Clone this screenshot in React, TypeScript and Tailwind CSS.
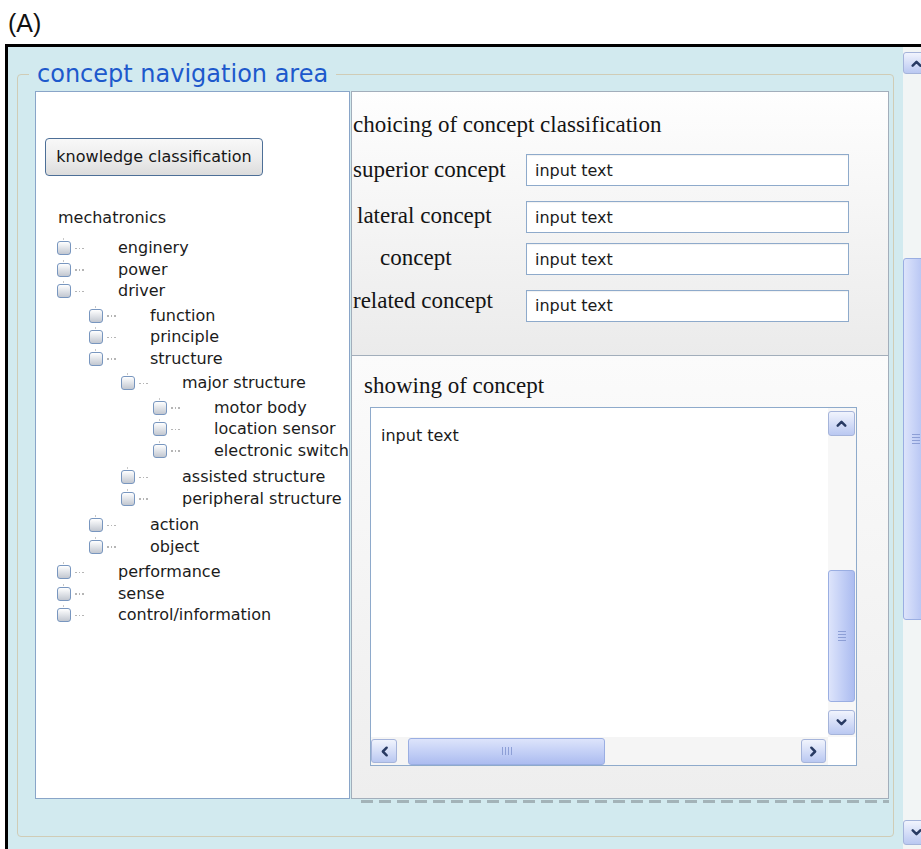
import clsx from "clsx";

type Dir = "up" | "down" | "left" | "right";

type TreeNode = { label: string; depth: 0 | 1 | 2 | 3; gap?: string };

const conceptTree: TreeNode[] = [
  { label: "enginery", depth: 0 },
  { label: "power", depth: 0 },
  { label: "driver", depth: 0 },
  { label: "function", depth: 1, gap: "mt-[3px]" },
  { label: "principle", depth: 1 },
  { label: "structure", depth: 1 },
  { label: "major structure", depth: 2, gap: "mt-[3px]" },
  { label: "motor body", depth: 3, gap: "mt-[3px]" },
  { label: "location sensor", depth: 3 },
  { label: "electronic switch", depth: 3 },
  { label: "assisted structure", depth: 2, gap: "mt-[5px]" },
  { label: "peripheral structure", depth: 2 },
  { label: "action", depth: 1, gap: "mt-[5px]" },
  { label: "object", depth: 1 },
  { label: "performance", depth: 0, gap: "mt-[4px]" },
  { label: "sense", depth: 0 },
  { label: "control/information", depth: 0 },
];

const indent = ["ml-0", "ml-[32px]", "ml-[64px]", "ml-[96px]"];

const conceptFields = [
  { label: "superior concept", gap: "mt-[15px]", labelClass: "pl-0" },
  { label: "lateral concept", gap: "mt-[15px]", labelClass: "pl-[4px] mb-[3px]" },
  { label: "concept", gap: "mt-[10px]", labelClass: "pl-[27px] mb-[2px]" },
  { label: "related concept", gap: "mt-[12px]", labelClass: "pl-0 mb-[9px]" },
];

const uiFont = "font-['DejaVu_Sans',sans-serif]";
const serifFont = "font-['Liberation_Serif',serif]";

function Chevron({ dir }: { dir: Dir }) {
  const d = {
    up: "M2.5 8 L6 4.5 L9.5 8",
    down: "M2.5 4 L6 7.5 L9.5 4",
    left: "M8 2.5 L4.5 6 L8 9.5",
    right: "M4 2.5 L7.5 6 L4 9.5",
  }[dir];
  return (
    <svg viewBox="0 0 12 12" className="h-[13px] w-[13px]" fill="none">
      <path d={d} stroke="#283a63" strokeWidth={2.3} strokeLinecap="round" strokeLinejoin="round" />
    </svg>
  );
}

function ScrollButton({ dir, className }: { dir: Dir; className?: string }) {
  return (
    <div
      className={clsx(
        "flex shrink-0 items-center justify-center rounded-[3px] border border-[#a5b4da] bg-linear-to-b from-[#f1f4fd] to-[#bac8f1]",
        className
      )}
    >
      <Chevron dir={dir} />
    </div>
  );
}

function VThumb({ className }: { className?: string }) {
  return (
    <div
      className={clsx(
        "flex shrink-0 items-center justify-center rounded-[3px] border border-[#9aaee2] bg-linear-to-r from-[#dde4fb] via-[#c4d0f6] to-[#acbcf0]",
        className
      )}
    >
      <div className="flex flex-col gap-[2px]">
        <div className="h-px w-[8px] bg-[#8d9fd6]" />
        <div className="h-px w-[8px] bg-[#8d9fd6]" />
        <div className="h-px w-[8px] bg-[#8d9fd6]" />
        <div className="h-px w-[8px] bg-[#8d9fd6]" />
      </div>
    </div>
  );
}

function HThumb({ className }: { className?: string }) {
  return (
    <div
      className={clsx(
        "flex shrink-0 items-center justify-center rounded-[3px] border border-[#9aaee2] bg-linear-to-b from-[#dde4fb] via-[#c4d0f6] to-[#acbcf0]",
        className
      )}
    >
      <div className="flex gap-[2px]">
        <div className="h-[8px] w-px bg-[#8d9fd6]" />
        <div className="h-[8px] w-px bg-[#8d9fd6]" />
        <div className="h-[8px] w-px bg-[#8d9fd6]" />
        <div className="h-[8px] w-px bg-[#8d9fd6]" />
      </div>
    </div>
  );
}

function TreeIcon() {
  return (
    <div className="relative flex items-center">
      <div className="absolute -top-[3px] left-[6px] h-[2px] w-px bg-[#c9c9c9]" />
      <div className="h-[14px] w-[14px] rounded-[3px] border border-[#7896bf] bg-linear-to-b from-[#ffffff] via-[#e0e3e8] to-[#c2c7d0]" />
      <div className="ml-[4px] flex gap-[2px]">
        <div className="h-[1.5px] w-[1.5px] bg-[#b5b5b5]" />
        <div className="h-[1.5px] w-[1.5px] bg-[#b5b5b5]" />
        <div className="h-[1.5px] w-[1.5px] bg-[#b5b5b5]" />
      </div>
    </div>
  );
}

function ClassificationPanel() {
  return (
    <div className={clsx("h-[708px] w-[315px] shrink-0 overflow-hidden border border-[#89a5c8] bg-white pl-[9px] pt-[46px] text-[16px] text-[#1b1b1b]", uiFont)}>
      <button className="flex h-[38px] w-[218px] items-center justify-center rounded-[4px] border border-[#4d6f97] bg-linear-to-b from-[#f8f8f8] via-[#eeeeee] to-[#dcdcdc] text-[16px] text-[#161616]">
        knowledge classification
      </button>

      <div className="ml-[13px] mt-[31px] flex h-[21.5px] items-center">mechatronics</div>

      <div className="ml-[12px] mt-[9px]">
        {conceptTree.map((node) => (
          <div key={node.label} className={clsx("flex h-[21.5px] items-center whitespace-nowrap", indent[node.depth], node.gap)}>
            <div className="w-[61px] shrink-0">
              <TreeIcon />
            </div>
            <span className="leading-none">{node.label}</span>
          </div>
        ))}
      </div>
    </div>
  );
}

function ConceptForm() {
  return (
    <div className={clsx("h-[265px] border border-[#a2aebb] bg-linear-to-b from-[#fefefe] to-[#ebebeb] pl-[1px] pt-[19px] text-[#141414]", serifFont)}>
      <div className="text-[23px] leading-[28px]">choicing of concept classification</div>
      {conceptFields.map((field) => (
        <div key={field.label} className={clsx("flex items-center", field.gap)}>
          <div className={clsx("w-[173px] shrink-0 whitespace-nowrap text-[23px] leading-[28px]", field.labelClass)}>{field.label}</div>
          <input
            readOnly
            value="input text"
            className={clsx("h-[32px] w-[323px] border border-[#8eaacb] bg-white px-[8px] text-[16px] text-[#1b1b1b] shadow-[inset_0_1px_1px_rgba(0,0,0,0.06)] outline-none", uiFont)}
          />
        </div>
      ))}
    </div>
  );
}

function ConceptViewer() {
  return (
    <div className={clsx("h-[443px] border-x border-b border-[#a2aebb] bg-linear-to-b from-[#fbfbfb] to-[#eeeeee] pl-[12px] pt-[16px] text-[#141414]", serifFont)}>
      <div className="text-[23px] leading-[28px]">showing of concept</div>
      <div className="ml-[6px] mt-[7px] grid h-[359px] w-[487px] grid-cols-[1fr_28px] grid-rows-[1fr_28px] border border-[#8eaacb] bg-white">
        <div className={clsx("pl-[10px] pt-[16px] text-[16px] leading-[24px] text-[#1b1b1b]", uiFont)}>input text</div>

        <div className="flex flex-col bg-[#f7f7f7] pr-[1px]">
          <ScrollButton dir="up" className="mt-[3px] h-[25px]" />
          <div className="flex-1" />
          <VThumb className="h-[132px]" />
          <ScrollButton dir="down" className="mb-[2px] mt-[8px] h-[25px]" />
        </div>

        <div className="flex items-center bg-[#f5f5f5]">
          <ScrollButton dir="left" className="h-[24px] w-[26px]" />
          <HThumb className="ml-[11px] h-[27px] w-[197px]" />
          <div className="flex-1" />
          <ScrollButton dir="right" className="mr-[2px] h-[24px] w-[25px]" />
        </div>

        <div className="bg-white" />
      </div>
    </div>
  );
}

function PageScrollbar() {
  return (
    <div className="flex w-[26px] shrink-0 flex-col bg-[#f2f5f5]">
      <ScrollButton dir="up" className="mt-[5px] h-[22px]" />
      <VThumb className="mt-[184px] h-[362px]" />
      <div className="flex-1" />
      <ScrollButton dir="down" className="mb-[4px] h-[25px]" />
    </div>
  );
}

export default function App() {
  return (
    <div className="flex h-[849px] w-[921px] flex-col overflow-hidden bg-white">
      <div className="h-[44px] shrink-0 pl-[8px] pt-[9px] font-['Liberation_Sans',sans-serif] text-[25px] leading-[28px] text-[#111]">(A)</div>

      <div className="ml-[5px] flex min-h-0 flex-1 border-l-[3px] border-t-[3px] border-black bg-[#d2eaef]">
        <div className="w-[895px] shrink-0 pl-[9px] pt-[12px]">
          <fieldset className="w-[877px] rounded-[4px] border border-[#d0ccb6] pb-[33px] pl-[17px] pr-[4px] pt-[2px]">
            <legend className={clsx("-ml-[6px] px-[8px] text-[24px] leading-[30px] text-[#1d59cc]", uiFont)}>concept navigation area</legend>

            <div className="flex items-start gap-px">
              <ClassificationPanel />
              <div className="flex w-[538px] flex-col">
                <ConceptForm />
                <ConceptViewer />
                <div className="ml-[10px] mt-[1px] h-[3px] bg-[repeating-linear-gradient(90deg,#a3b3b8_0_12px,transparent_12px_18px)]" />
              </div>
            </div>
          </fieldset>
        </div>

        <PageScrollbar />
      </div>
    </div>
  );
}
